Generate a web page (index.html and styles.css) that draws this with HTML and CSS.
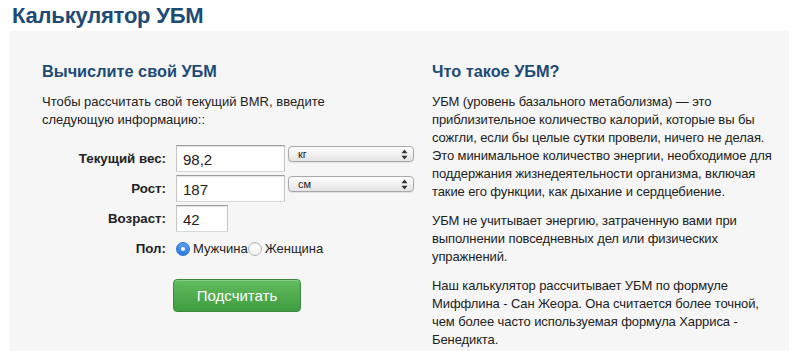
FILE: index.html
```html
<!DOCTYPE html>
<html lang="ru">
<head>
<meta charset="utf-8">
<title>Калькулятор УБМ</title>
<link rel="stylesheet" href="styles.css">
</head>
<body>
<header class="site-header">
  <h1 class="page-title">Калькулятор УБМ</h1>
</header>
<main class="panel">
  <section class="col col-calc">
    <h2 class="section-title">Вычислите свой УБМ</h2>
    <p class="intro">Чтобы рассчитать свой текущий BMR, введите следующую информацию::</p>
    <form class="calc-form">
      <label class="field-label">Текущий вес:</label>
      <div class="field-controls">
        <input class="text-input input-wide" type="text" value="98,2">
        <div class="select"><span class="select-text">кг</span>
          <svg class="select-arrows" width="7" height="11" viewBox="0 0 7 11"><path d="M3.5 0.5 L6.5 4.2 H0.5 Z M3.5 10.5 L6.5 6.8 H0.5 Z" fill="#333"/></svg>
        </div>
      </div>
      <label class="field-label">Рост:</label>
      <div class="field-controls">
        <input class="text-input input-wide" type="text" value="187">
        <div class="select"><span class="select-text">см</span>
          <svg class="select-arrows" width="7" height="11" viewBox="0 0 7 11"><path d="M3.5 0.5 L6.5 4.2 H0.5 Z M3.5 10.5 L6.5 6.8 H0.5 Z" fill="#333"/></svg>
        </div>
      </div>
      <label class="field-label">Возраст:</label>
      <div class="field-controls">
        <input class="text-input input-short" type="text" value="42">
      </div>
      <label class="field-label row-radio">Пол:</label>
      <div class="field-controls radio-group row-radio">
        <span class="radio radio-on"></span><span class="radio-label">Мужчина</span>
        <span class="radio"></span><span class="radio-label">Женщина</span>
      </div>
      <div class="button-row">
        <button type="button" class="btn-submit">Подсчитать</button>
      </div>
    </form>
  </section>
  <section class="col col-info">
    <h2 class="section-title">Что такое УБМ?</h2>
    <p class="info-text">УБМ (уровень базального метаболизма) — это приблизительное количество калорий, которые вы бы сожгли, если бы целые сутки провели, ничего не делая. Это минимальное количество энергии, необходимое для поддержания жизнедеятельности организма, включая такие его функции, как дыхание и сердцебиение.</p>
    <p class="info-text">УБМ не учитывает энергию, затраченную вами при выполнении повседневных дел или физических упражнений.</p>
    <p class="info-text">Наш калькулятор рассчитывает УБМ по формуле Миффлина - Сан Жеора. Она считается более точной, чем более часто используемая формула Харриса - Бенедикта.</p>
  </section>
</main>
</body>
</html>
```
FILE: styles.css
```css
html, body {
  margin: 0;
  padding: 0;
  background: #ffffff;
  overflow: hidden;
}
body {
  font-family: "Liberation Sans", Arial, Helvetica, sans-serif;
  color: #222222;
  font-size: 13px;
}
.site-header {
  padding: 0 12px;
}
.page-title {
  margin: 0;
  font-size: 22px;
  line-height: 32px;
  font-weight: bold;
  letter-spacing: -0.2px;
  color: #1d4b75;
}
.panel {
  margin-left: 11px;
  width: 777px;
  min-height: 330px;
  box-sizing: border-box;
  background: #f6f6f6;
  box-shadow: 0 0 2px rgba(0, 0, 0, 0.13);
  padding: 28px 11px 0 31px;
  display: grid;
  grid-template-columns: 320px 1fr;
  column-gap: 70px;
}
.section-title {
  margin: 0;
  font-size: 16.3px;
  line-height: 22px;
  font-weight: bold;
  color: #1d4b75;
}
.intro, .info-text {
  margin: 11px 0 0;
  font-size: 13px;
  line-height: 18px;
}
.info-text {
  letter-spacing: -0.1px;
}
.info-text + .info-text {
  margin-top: 11px;
}
.calc-form {
  margin-top: 16px;
  display: grid;
  grid-template-columns: 124px 1fr;
  grid-auto-rows: auto;
  column-gap: 10px;
  row-gap: 3px;
}
.field-label {
  justify-self: end;
  align-self: center;
  font-weight: bold;
  font-size: 13.3px;
  line-height: 18px;
  color: #222;
}
.field-controls {
  display: flex;
  align-items: flex-start;
  gap: 3px;
  height: 27px;
}
.text-input {
  box-sizing: border-box;
  height: 27px;
  margin: 0;
  padding: 2px 6px 0;
  border: 1px solid #c6c6c6;
  border-top-color: #9c9c9c;
  border-bottom-color: #d8d8d8;
  box-shadow: inset 0 1px 1px rgba(0, 0, 0, 0.12);
  background: #ffffff;
  font-family: "Liberation Sans", Arial, sans-serif;
  font-size: 15px;
  color: #222;
  outline: none;
}
.input-wide {
  width: 109px;
}
.input-short {
  width: 52px;
}
.select {
  box-sizing: border-box;
  width: 126px;
  height: 16px;
  margin-top: 1px;
  border: 1px solid #a8a8a8;
  border-radius: 4px;
  background: linear-gradient(#fefefe, #e4e4e4);
  box-shadow: 0 1px 1px rgba(0, 0, 0, 0.08);
  display: flex;
  align-items: center;
  justify-content: space-between;
  padding: 0 5px 0 9px;
}
.select-text {
  font-size: 11px;
  line-height: 14px;
  color: #222;
}
.select-arrows {
  display: block;
}
.row-radio {
  margin-top: 5px;
}
.radio-group {
  height: 18px;
  align-items: center;
  gap: 0;
}
.radio {
  box-sizing: border-box;
  width: 14px;
  height: 14px;
  border-radius: 50%;
  border: 1px solid #b4b4b4;
  background: linear-gradient(#ffffff, #f1f1f1);
  box-shadow: inset 0 1px 1px rgba(0, 0, 0, 0.08);
  display: flex;
  align-items: center;
  justify-content: center;
  flex: none;
}
.radio-on {
  border-color: #2d6fd0;
  background: linear-gradient(#5aa0f6, #2a78e4);
  box-shadow: none;
}
.radio-on::after {
  content: "";
  width: 4px;
  height: 4px;
  border-radius: 50%;
  background: #ffffff;
}
.radio-label {
  font-size: 13px;
  line-height: 18px;
  margin-left: 3px;
  color: #222;
}
.button-row {
  grid-column: 2;
  margin-top: 18px;
  margin-left: -3px;
}
.btn-submit {
  box-sizing: border-box;
  width: 128px;
  height: 33px;
  border: 1px solid #3a8a3b;
  border-radius: 4px;
  background: linear-gradient(#62bd5f, #3f9c40);
  box-shadow: inset 0 1px 0 rgba(255, 255, 255, 0.25);
  color: #ffffff;
  font-family: "Liberation Sans", Arial, sans-serif;
  font-size: 15px;
  padding: 0;
  cursor: pointer;
}
```
